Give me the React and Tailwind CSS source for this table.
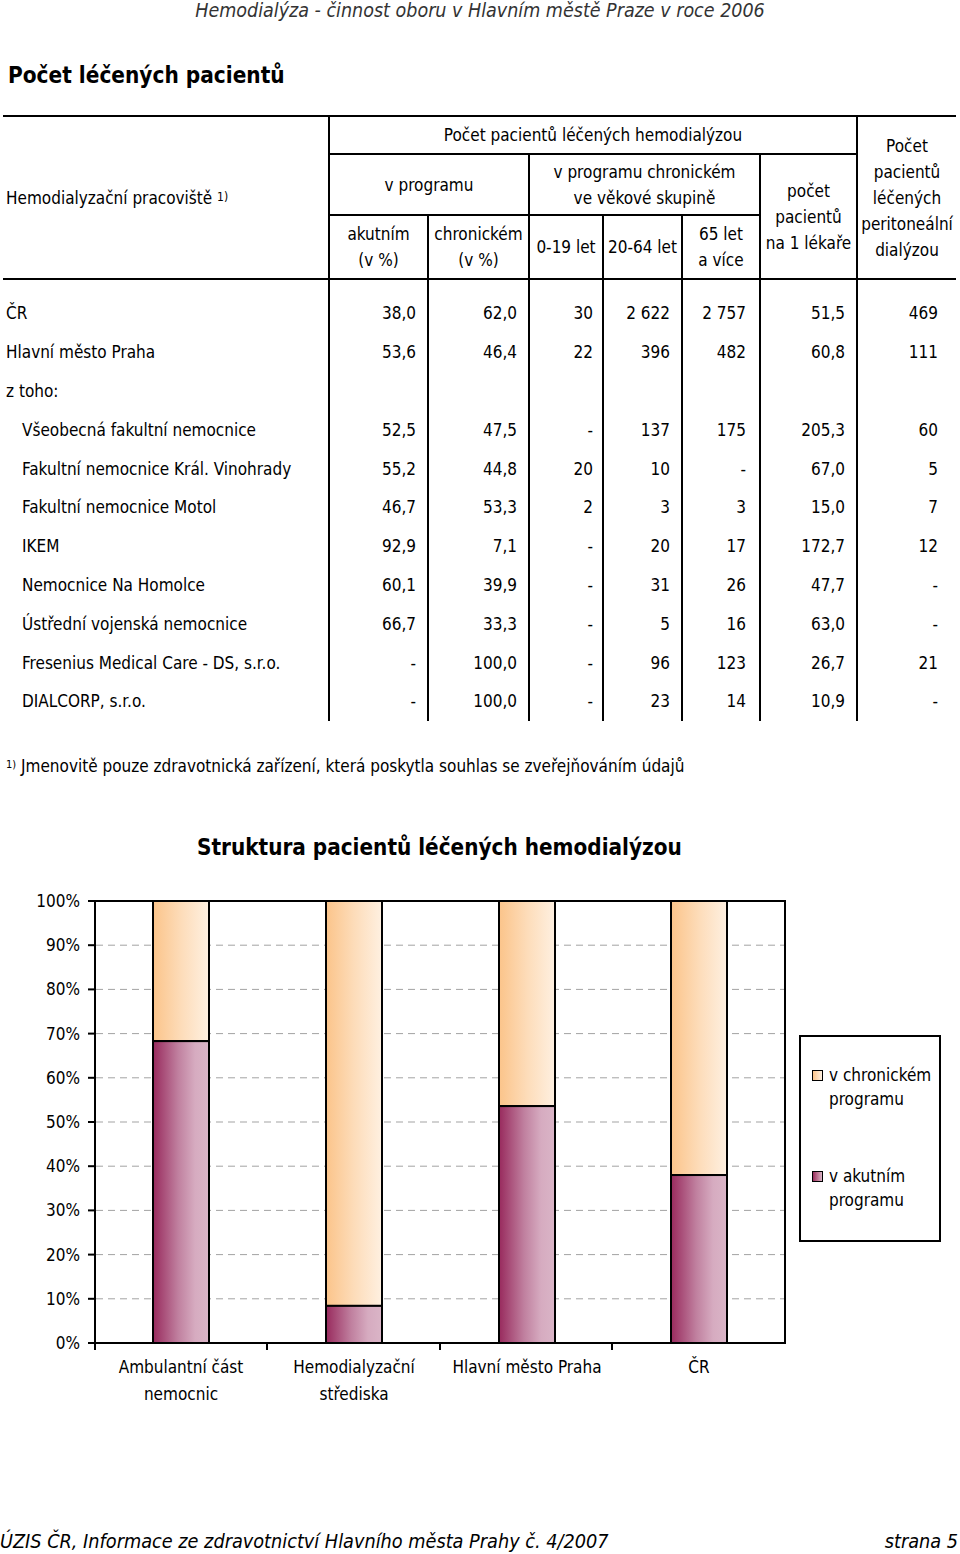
const rows = [
  ["ČR", "38,0", "62,0", "30", "2 622", "2 757", "51,5", "469", 0],
  ["Hlavní město Praha", "53,6", "46,4", "22", "396", "482", "60,8", "111", 0],
  ["z toho:", "", "", "", "", "", "", "", 0],
  ["Všeobecná fakultní nemocnice", "52,5", "47,5", "-", "137", "175", "205,3", "60", 1],
  ["Fakultní nemocnice Král. Vinohrady", "55,2", "44,8", "20", "10", "-", "67,0", "5", 1],
  ["Fakultní nemocnice Motol", "46,7", "53,3", "2", "3", "3", "15,0", "7", 1],
  ["IKEM", "92,9", "7,1", "-", "20", "17", "172,7", "12", 1],
  ["Nemocnice Na Homolce", "60,1", "39,9", "-", "31", "26", "47,7", "-", 1],
  ["Ústřední vojenská nemocnice", "66,7", "33,3", "-", "5", "16", "63,0", "-", 1],
  ["Fresenius Medical Care - DS, s.r.o.", "-", "100,0", "-", "96", "123", "26,7", "21", 1],
  ["DIALCORP, s.r.o.", "-", "100,0", "-", "23", "14", "10,9", "-", 1],
];

const numPad = ["pr-[11px]", "pr-[11px]", "pr-[9px]", "pr-[11px]", "pr-[13px]", "pr-[11px]", "pr-[18px]"];

const bars = [
  { x: 153, a: 68.3, label: ["Ambulantní část", "nemocnic"] },
  { x: 326, a: 8.4, label: ["Hemodialyzační", "střediska"] },
  { x: 499, a: 53.6, label: ["Hlavní město Praha"] },
  { x: 671, a: 38.0, label: ["ČR"] },
];

const Chart = () => {
  const base = 462;
  const step = 44.2;
  return (
    <svg width="790" height="530" className="shrink-0">
      <defs>
        <linearGradient id="chron" x1="0" x2="1" y1="0" y2="0">
          <stop offset="0" stopColor="#fbc48a" />
          <stop offset="0.5" stopColor="#fddcb9" />
          <stop offset="1" stopColor="#fef0e1" />
        </linearGradient>
        <linearGradient id="acut" x1="0" x2="1" y1="0" y2="0">
          <stop offset="0" stopColor="#982a5d" />
          <stop offset="0.45" stopColor="#c0809f" />
          <stop offset="0.75" stopColor="#d6abc0" />
          <stop offset="1" stopColor="#dab5c7" />
        </linearGradient>
      </defs>
      {Array.from({ length: 10 }, (_, k) => (
        <line
          key={k}
          x1="96"
          x2="784"
          y1={base - (k + 1) * step}
          y2={base - (k + 1) * step}
          stroke="#a3a3a3"
          strokeWidth="1"
          strokeDasharray="7 5"
        />
      ))}
      {bars.map((b) => {
        const top = base - b.a * 4.42;
        return (
          <g key={b.x}>
            <rect x={b.x} y="20" width="56" height={top - 20} fill="url(#chron)" stroke="#000" strokeWidth="2" />
            <rect x={b.x} y={top} width="56" height={base - top} fill="url(#acut)" stroke="#000" strokeWidth="2" />
          </g>
        );
      })}
      <polyline points="95,469 95,20 785,20 785,462 95,462" fill="none" stroke="#000" strokeWidth="2" />
      {Array.from({ length: 11 }, (_, k) => (
        <g key={k}>
          <line x1="88" x2="95" y1={base - k * step} y2={base - k * step} stroke="#000" strokeWidth="2" />
          <text x="80" y={base - k * step} textAnchor="end" dominantBaseline="central" fontSize="17">
            {k * 10}%
          </text>
        </g>
      ))}
      {[267, 440, 612].map((x) => (
        <line key={x} x1={x} x2={x} y1="462" y2="469" stroke="#000" strokeWidth="2" />
      ))}
      {bars.map((b) =>
        b.label.map((t, i) => (
          <text key={b.x + t} x={b.x + 28} y={486 + i * 27} textAnchor="middle" dominantBaseline="central" fontSize="17">
            {t}
          </text>
        ))
      )}
    </svg>
  );
};

const App = () => {
  return (
    <div className="w-[960px] h-[1554px] bg-white text-black font-['DejaVu_Sans_Condensed','Liberation_Sans',sans-serif] flex flex-col overflow-hidden">
      <div className="h-[22px] leading-[22px] text-center text-[19.5px] italic text-[#333]">
        Hemodialýza - činnost oboru v Hlavním městě Praze v roce 2006
      </div>

      <h1 className="mt-[38px] h-[30px] leading-[30px] pl-[8px] text-[22.4px] font-bold">Počet léčených pacientů</h1>

      <table className="mt-[25px] ml-[3px] w-[953px] table-fixed border-collapse text-[17px] leading-[26px]">
        <colgroup>
          <col className="w-[326px]" />
          <col className="w-[99px]" />
          <col className="w-[101px]" />
          <col className="w-[74px]" />
          <col className="w-[79px]" />
          <col className="w-[78px]" />
          <col className="w-[97px]" />
          <col className="w-[99px]" />
        </colgroup>
        <thead className="text-center">
          <tr className="h-[38px] border-t-2 border-black">
            <th rowSpan={3} className="font-normal text-left pl-[3px] border-r-2 border-black">
              Hemodialyzační pracoviště <sup className="text-[12px] relative -top-[3px]">1)</sup>
            </th>
            <th colSpan={6} className="font-normal border-r-2 border-b-2 border-black">
              Počet pacientů léčených hemodialýzou
            </th>
            <th rowSpan={3} className="font-normal">
              Počet
              <br />
              pacientů
              <br />
              léčených
              <br />
              peritoneální
              <br />
              dialýzou
            </th>
          </tr>
          <tr className="h-[61px]">
            <th colSpan={2} className="font-normal border-r-2 border-b-2 border-black">
              v programu
            </th>
            <th colSpan={3} className="font-normal border-r-2 border-b-2 border-black">
              v programu chronickém
              <br />
              ve věkové skupině
            </th>
            <th rowSpan={2} className="font-normal border-r-2 border-black whitespace-nowrap">
              počet
              <br />
              pacientů
              <br />
              na 1 lékaře
            </th>
          </tr>
          <tr className="h-[64px] border-b-2 border-black">
            <th className="font-normal border-r-2 border-black">
              akutním
              <br />
              (v %)
            </th>
            <th className="font-normal border-r-2 border-black">
              chronickém
              <br />
              (v %)
            </th>
            <th className="font-normal border-r-2 border-black whitespace-nowrap">0-19 let</th>
            <th className="font-normal border-r-2 border-black whitespace-nowrap">20-64 let</th>
            <th className="font-normal border-r-2 border-black">
              65 let
              <br />a více
            </th>
          </tr>
        </thead>
        <tbody>
          <tr className="h-[15px]">
            <td className="border-r-2 border-black" />
            {numPad.map((_, i) => (
              <td key={i} className={i < 6 ? "border-r-2 border-black" : ""} />
            ))}
          </tr>
          {rows.map((r) => (
            <tr key={r[0]} className="h-[38.8px]">
              <td className={`border-r-2 border-black whitespace-nowrap ${r[8] ? "pl-[19px]" : "pl-[3px]"}`}>{r[0]}</td>
              {r.slice(1, 8).map((v, i) => (
                <td key={i} className={`text-right ${numPad[i]} ${i < 6 ? "border-r-2 border-black" : ""}`}>
                  {v}
                </td>
              ))}
            </tr>
          ))}
        </tbody>
      </table>

      <div className="mt-[32px] h-[26px] leading-[26px] pl-[6px] text-[17px]">
        <sup className="text-[11px] relative -top-[4px]">1)</sup> Jmenovitě pouze zdravotnická zařízení, která poskytla souhlas se zveřejňováním údajů
      </div>

      <h2 className="mt-[52px] h-[32px] leading-[32px] text-[22.3px] font-bold pl-[197px]">
        Struktura pacientů léčených hemodialýzou
      </h2>

      <div className="mt-[18px] flex">
        <Chart />
        <div className="mt-[154px] ml-[9px] w-[142px] h-[207px] border-2 border-black pl-[11px] pt-[26px] text-[17px] leading-[24px]">
          <div className="flex gap-[6px]">
            <div className="mt-[7px] w-[11px] h-[11px] border border-black bg-linear-to-r from-[#fbc48a] to-[#fef0e1] shrink-0" />
            <div className="whitespace-nowrap">
              v chronickém
              <br />
              programu
            </div>
          </div>
          <div className="mt-[53px] flex gap-[6px]">
            <div className="mt-[7px] w-[11px] h-[11px] border border-black bg-linear-to-r from-[#982a5d] to-[#dab5c7] shrink-0" />
            <div className="whitespace-nowrap">
              v akutním
              <br />
              programu
            </div>
          </div>
        </div>
      </div>

      <div className="mt-[119px] h-[24px] leading-[24px] flex justify-between italic text-[19.7px] pr-[2px]">
        <span>ÚZIS ČR, Informace ze zdravotnictví Hlavního města Prahy č. 4/2007</span>
        <span>strana 5</span>
      </div>
    </div>
  );
};

export default App;
